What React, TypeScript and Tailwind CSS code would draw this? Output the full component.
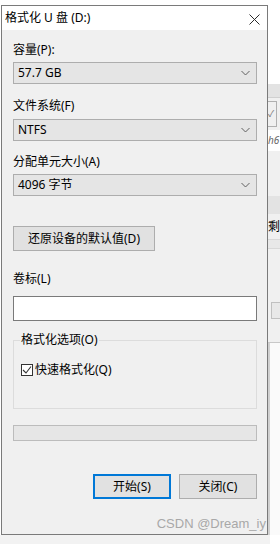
const Chevron = () => (
  <svg width="9" height="6" viewBox="0 0 9 6" className="mr-[6px]">
    <polyline points="0.5,1 4.5,5 8.5,1" fill="none" stroke="#606060" strokeWidth="1" />
  </svg>
);

const Select = ({ value, className }: { value: string; className: string }) => (
  <div
    className={`flex h-[22px] items-center justify-between border border-[#adadad] bg-[#e5e5e5] pl-[4px] text-[12px] leading-[16px] ${className}`}
  >
    <span>{value}</span>
    <Chevron />
  </div>
);

const Label = ({ text, className }: { text: string; className: string }) => (
  <div className={`h-[16px] text-[12px] leading-[16px] ${className}`}>{text}</div>
);

const Button = ({ text, primary }: { text: string; primary?: boolean }) => (
  <div
    className={`flex h-[25px] w-[78px] items-center justify-center bg-[#e1e1e1] text-[12px] leading-[16px] ${
      primary ? "border-2 border-[#0078d7]" : "border border-[#adadad]"
    }`}
  >
    {text}
  </div>
);

// strip of the window behind the dialog
const BackWindow = () => (
  <div className="flex w-[12px] flex-col text-[11px] text-[#444]">
    <div className="h-[84px] bg-white" />
    <div className="h-[14px] border-b border-[#d0d0d0] bg-[#e3e3e3]" />
    <div className="flex h-[32px] items-center bg-[#f0f0f0]">
      <div className="flex h-[26px] w-[9px] items-center border border-l-0 border-[#b0b0b0] text-[9px] text-[#777]">
        ✓
      </div>
    </div>
    <div className="h-[21px] overflow-hidden bg-white pt-[4px] text-[10px] italic leading-[12px] text-[#666]">
      h6
    </div>
    <div className="h-[45px] bg-[#f0f0f0]" />
    <div className="h-[18px] bg-[#e3e3e3]" />
    <div className="h-[25px] overflow-hidden bg-[#f0f0f0] pt-[5px] font-['Noto_Sans_CJK_SC',sans-serif] text-[12px] leading-[14px] text-black">
      剩
    </div>
    <div className="h-[10px] border-y border-[#d8d8d8] bg-[#e8e8e8]" />
    <div className="flex h-[93px] flex-col bg-[#f0f0f0] pl-[3px] pt-[53px]">
      <div className="h-[17px] border border-r-0 border-[#c0c0c0] bg-[#e8e8e8]" />
    </div>
    <div className="flex flex-1 border-t border-[#c8c8c8] bg-[#fafafa]">
      <div className="w-[2px] bg-[#d0d0d0]" />
    </div>
  </div>
);

export default function App() {
  return (
    <div className="flex h-[544px] w-[280px] flex-col bg-white font-['Noto_Sans','Noto_Sans_CJK_SC',sans-serif] text-black">
      <div className="flex h-[535px] w-full">
        <div className="flex w-[268px] flex-col pl-[1px] pt-[5px]">
          <div className="flex flex-1 flex-col border border-[#7a7a7a] bg-[#f0f0f0]">
            {/* Title bar */}
            <div className="flex h-[24px] items-center justify-between bg-white pl-[3px] pr-[7px] text-[12px] leading-[16px]">
              <span>格式化 U 盘 (D:)</span>
              <svg width="11" height="11" viewBox="0 0 11 11" className="mt-[2px]">
                <path d="M0.5 0.5 L10.5 10.5 M10.5 0.5 L0.5 10.5" stroke="#2b2b2b" strokeWidth="1" />
              </svg>
            </div>

            {/* Body */}
            <div className="flex flex-col pl-[11px] pr-[10px]">
              <Label text="容量(P):" className="mt-[12px]" />
              <Select value="57.7 GB" className="mt-[4px]" />
              <Label text="文件系统(F)" className="mt-[14px]" />
              <Select value="NTFS" className="mt-[5px]" />
              <Label text="分配单元大小(A)" className="mt-[13px]" />
              <Select value="4096 字节" className="mt-[4px]" />

              <div className="mt-[30px] flex h-[25px] w-[142px] items-center justify-center border border-[#adadad] bg-[#e1e1e1] text-[12px] leading-[16px]">
                还原设备的默认值(D)
              </div>

              <Label text="卷标(L)" className="mt-[20px]" />
              <div className="mt-[9px] h-[25px] border border-[#7a7a7a] bg-white" />

              {/* Options group */}
              <div className="relative mt-[19px] h-[69px] border border-[#dcdcdc]">
                <span className="absolute left-[6px] top-[-9px] bg-[#f0f0f0] px-[1px] text-[12px] leading-[16px]">
                  格式化选项(O)
                </span>
                <div className="ml-[7px] mt-[21px] flex items-center gap-[2px]">
                  <div className="flex h-[12px] w-[12px] items-center justify-center border border-[#333] bg-white">
                    <svg width="10" height="10" viewBox="0 0 10 10">
                      <polyline points="1,5 4,8 9,1.5" fill="none" stroke="#333" strokeWidth="1.1" />
                    </svg>
                  </div>
                  <span className="text-[12px] leading-[16px]">快速格式化(Q)</span>
                </div>
              </div>

              {/* Progress */}
              <div className="mt-[16px] h-[16px] border border-[#bcbcbc] bg-[#e6e6e6]" />

              {/* Buttons */}
              <div className="mt-[33px] flex justify-end gap-[8px]">
                <Button text="开始(S)" primary />
                <Button text="关闭(C)" />
              </div>

              <div className="mr-[-9px] mt-[17px] text-right font-['Liberation_Sans',sans-serif] text-[13px] leading-[16px] text-[#a8a8a8]">
                CSDN @Dream_iy
              </div>
            </div>
          </div>
        </div>
        <BackWindow />
      </div>
      <div className="flex flex-1">
        <div className="w-[270px] bg-[#f2f2f2]" />
        <div className="flex-1 bg-white" />
      </div>
    </div>
  );
}
